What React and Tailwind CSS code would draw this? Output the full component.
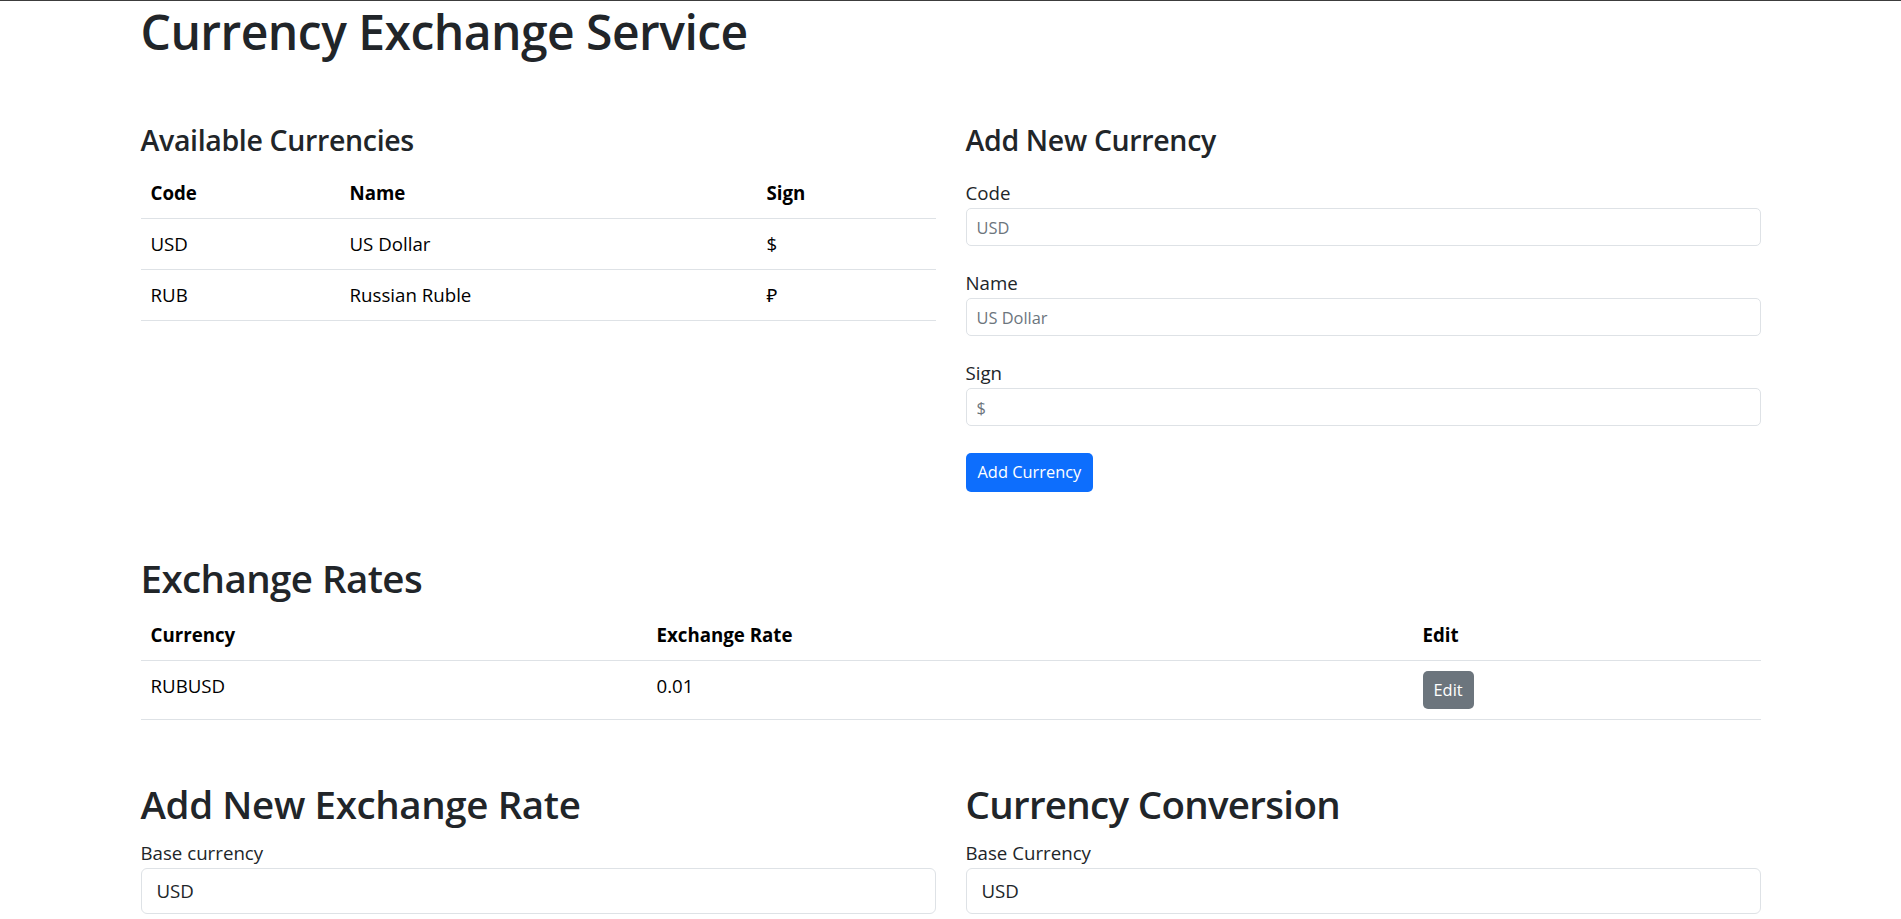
import React from 'react';

const currencies = [
    { code: 'USD', name: 'US Dollar', sign: '$' },
    { code: 'RUB', name: 'Russian Ruble', sign: '₽' },
];

const rates = [
    { pair: 'RUBUSD', rate: '0.01' },
];

function Field({ label, placeholder }) {
    return (
        <div className="mb-[22px]">
            <label className="block h-[30px] leading-[30px] text-[18.7px] text-[#212529]">{label}</label>
            <input
                type="text"
                placeholder={placeholder}
                className="block w-full h-[38px] px-[10px] text-[16.4px] border border-[#dee2e6] rounded-[5px] bg-white outline-none placeholder:text-[#6c757d]"
            />
        </div>
    );
}

function SelectBox({ label, value }) {
    return (
        <div>
            <label className="block h-[30px] leading-[30px] text-[18.7px] text-[#212529]">{label}</label>
            <select className="block w-full h-[46px] pl-[15px] pr-[45px] text-[18.7px] text-[#212529] border border-[#dee2e6] rounded-[6px] bg-white appearance-none outline-none">
                <option>{value}</option>
            </select>
        </div>
    );
}

export default function App() {
    return (
        <div className="min-h-screen bg-white border-t border-[#3c3c3c] text-[#212529]" style={{ fontFamily: '"Open Sans", "Noto Sans", sans-serif' }}>
            <div className="w-[1650px] mx-auto px-[15px]">
                <h1 className="h-[60px] leading-[61px] text-[48px] font-semibold tracking-[-0.011em]">Currency Exchange Service</h1>

                {/* Currencies + add form */}
                <div className="flex gap-[30px] mt-[61px]">
                    <div className="w-[795px]">
                        <h4 className="h-[36px] leading-[36px] text-[28.5px] font-semibold tracking-[-0.012em] mb-[10px]">Available Currencies</h4>
                        <table className="w-full table-fixed border-collapse text-[18.7px] text-black">
                            <colgroup>
                                <col className="w-[199px]" />
                                <col className="w-[416px]" />
                                <col className="w-[180px]" />
                            </colgroup>
                            <thead>
                                <tr className="border-b border-[#dee2e6]">
                                    <th className="p-[10px] leading-[30px] text-left font-bold">Code</th>
                                    <th className="p-[10px] leading-[30px] text-left font-bold">Name</th>
                                    <th className="px-[10px] pl-[11px] py-[10px] leading-[30px] text-left font-bold">Sign</th>
                                </tr>
                            </thead>
                            <tbody>
                                {currencies.map((c) => (
                                    <tr key={c.code} className="border-b border-[#dee2e6]">
                                        <td className="p-[10px] leading-[30px]">{c.code}</td>
                                        <td className="p-[10px] leading-[30px]">{c.name}</td>
                                        <td className="px-[10px] pl-[11px] py-[10px] leading-[30px]">{c.sign}</td>
                                    </tr>
                                ))}
                            </tbody>
                        </table>
                    </div>

                    <div className="w-[795px]">
                        <h4 className="h-[36px] leading-[36px] text-[28.5px] font-semibold tracking-[-0.012em] mb-[20px]">Add New Currency</h4>
                        <Field label="Code" placeholder="USD" />
                        <Field label="Name" placeholder="US Dollar" />
                        <Field label="Sign" placeholder="$" />
                        <button className="mt-[5px] h-[39px] px-[12px] text-[16.4px] text-white bg-[#0d6efd] rounded-[5px]">Add Currency</button>
                    </div>
                </div>

                {/* Exchange rates */}
                <h2 className="mt-[61px] h-[48px] leading-[50px] text-[38.5px] font-semibold tracking-[-0.015em] mb-[9px]">Exchange Rates</h2>
                <table className="w-full table-fixed border-collapse text-[18.7px] text-black">
                    <colgroup>
                        <col className="w-[506px]" />
                        <col className="w-[766px]" />
                        <col className="w-[348px]" />
                    </colgroup>
                    <thead>
                        <tr className="border-b border-[#dee2e6]">
                            <th className="p-[10px] leading-[30px] text-left font-bold">Currency</th>
                            <th className="p-[10px] leading-[30px] text-left font-bold">Exchange Rate</th>
                            <th className="p-[10px] leading-[30px] text-left font-bold">Edit</th>
                        </tr>
                    </thead>
                    <tbody>
                        {rates.map((r) => (
                            <tr key={r.pair} className="border-b border-[#dee2e6]">
                                <td className="p-[10px] leading-[30px] align-top">{r.pair}</td>
                                <td className="p-[10px] leading-[30px] align-top">{r.rate}</td>
                                <td className="p-[10px] align-top">
                                    <button className="block h-[38px] px-[11px] text-[16.4px] text-white bg-[#6c757d] rounded-[5px]">Edit</button>
                                </td>
                            </tr>
                        ))}
                    </tbody>
                </table>

                {/* Add rate + conversion */}
                <div className="flex gap-[30px] mt-[58px]">
                    <div className="w-[795px]">
                        <h2 className="h-[48px] leading-[53px] text-[38.5px] font-semibold tracking-[-0.01em] mb-[12px]">Add New Exchange Rate</h2>
                        <SelectBox label="Base currency" value="USD" />
                    </div>
                    <div className="w-[795px]">
                        <h2 className="h-[48px] leading-[53px] text-[38.5px] font-semibold tracking-[-0.018em] mb-[12px]">Currency Conversion</h2>
                        <SelectBox label="Base Currency" value="USD" />
                    </div>
                </div>
                <div className="h-[40px]"></div>
            </div>
        </div>
    );
}
